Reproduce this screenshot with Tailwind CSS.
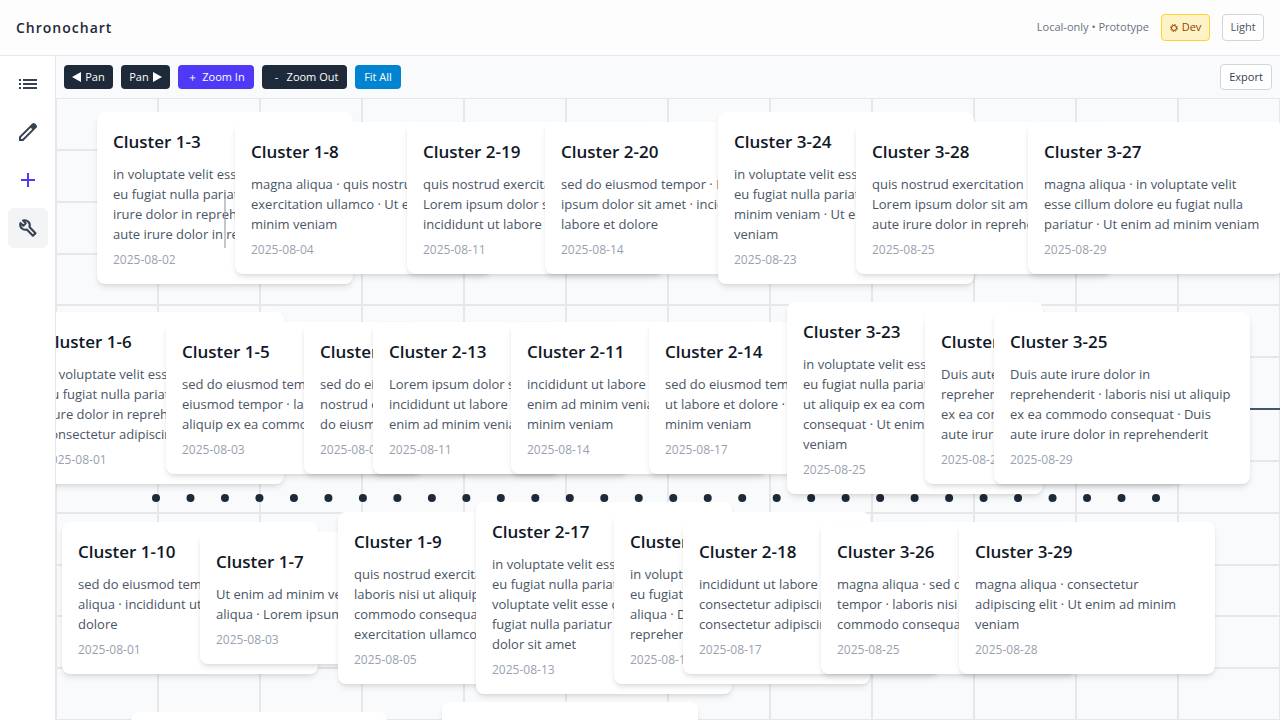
<!DOCTYPE html>
<html lang="en">
<head>
<meta charset="utf-8">
<meta name="viewport" content="width=device-width, initial-scale=1">
<title>Chronochart</title>
<script src="https://cdn.jsdelivr.net/npm/@tailwindcss/browser@4"></script>
</head>
<body class="flex h-screen flex-col overflow-hidden bg-white font-['Open_Sans','Noto_Sans',sans-serif] text-gray-800">
<header class="flex h-14 shrink-0 items-center justify-between border-b border-gray-200 bg-[#fdfdfd] px-4">
  <h1 class="text-sm font-semibold tracking-[1px] text-gray-800">Chronochart</h1>
  <div class="flex items-center gap-3 text-[11px]">
    <span class="text-gray-500">Local-only • Prototype</span>
    <button type="button" class="flex h-[27px] w-[49px] items-center justify-center gap-1 rounded border border-[#ffd230] bg-[#fef3c6] text-[#973c00]">
      <svg class="size-2" viewBox="0 0 16 16" fill="none" stroke="currentColor" aria-hidden="true"><circle cx="8" cy="8" r="5" stroke-width="2"/><circle cx="8" cy="8" r="7" stroke-width="2" stroke-dasharray="2.75 2.75"/></svg>
      Dev
    </button>
    <button type="button" class="h-[27px] w-[42px] rounded border border-gray-300 bg-white text-gray-600">Light</button>
  </div>
</header>
<div class="flex min-h-0 grow">
  <nav aria-label="Tools" class="flex w-14 shrink-0 flex-col items-center gap-2 border-r border-gray-200 bg-white py-2 text-gray-700">
    <button type="button" aria-label="Events" class="flex size-10 items-center justify-center rounded-md">
      <svg class="size-6" viewBox="0 0 24 24" fill="currentColor" aria-hidden="true"><path d="M3 7h2v2H3zM7 7h14v2H7zM3 11h2v2H3zM7 11h14v2H7zM3 15h2v2H3zM7 15h14v2H7z"/></svg>
    </button>
    <button type="button" aria-label="Edit" class="flex size-10 items-center justify-center rounded-md">
      <svg class="size-6" viewBox="0 0 24 24" fill="currentColor" aria-hidden="true"><path d="M5 19h1.425L16.2 9.225 14.775 7.8 5 17.575V19Zm-2 2v-4.25L16.2 3.575q.3-.275.663-.425.362-.15.762-.15t.775.15q.375.15.65.45L20.425 5q.3.275.438.65.137.375.137.75 0 .4-.137.762-.138.363-.438.663L7.25 21Z"/></svg>
    </button>
    <button type="button" aria-label="Add" class="flex size-10 items-center justify-center rounded-md text-[#4f39f6]">
      <svg class="size-6" viewBox="0 0 24 24" fill="currentColor" aria-hidden="true"><path d="M11 13H5v-2h6V5h2v6h6v2h-6v6h-2Z"/></svg>
    </button>
    <button type="button" aria-label="Developer tools" aria-pressed="true" class="flex size-10 items-center justify-center rounded-md bg-gray-100">
      <svg class="size-[18px] overflow-visible" viewBox="0 0 24 24" fill="none" stroke="currentColor" stroke-width="2.8" stroke-linejoin="round" aria-hidden="true"><path d="M22 19l-8-8.4c.8-2.4.2-5-1.6-6.8C10.600 2 8 1.300 5.400 2.100L9 5.800 5.800 9 2 5.400C1.200 8 1.800 10.600 3.600 12.400c1.800 1.800 4.400 2.400 6.800 1.600l8.200 8.200z"/></svg>
    </button>
  </nav>
  <main class="flex min-w-0 grow flex-col bg-[#f9fafc]">
    <div class="flex h-[43px] shrink-0 items-center gap-2 border-b border-gray-200 px-2 text-[11px] text-white">
      <button type="button" class="flex h-6 w-[49px] items-center justify-center gap-1 rounded bg-gray-800"><svg class="h-[10px] w-[9px]" viewBox="0 0 9 10" fill="currentColor" aria-hidden="true"><path d="M9 0v10L0 5z"/></svg>Pan</button>
      <button type="button" class="flex h-6 w-[49px] items-center justify-center gap-1 rounded bg-gray-800">Pan<svg class="h-[10px] w-[9px]" viewBox="0 0 9 10" fill="currentColor" aria-hidden="true"><path d="M0 0v10l9-5z"/></svg></button>
      <button type="button" class="flex h-6 w-[76px] items-center justify-center gap-1 rounded bg-[#4f39f6]"><span>＋</span>Zoom In</button>
      <button type="button" class="flex h-6 w-[85px] items-center justify-center gap-1 rounded bg-gray-800"><span class="w-3">-</span>Zoom Out</button>
      <button type="button" class="h-6 w-[46px] rounded bg-[#0084d1]">Fit All</button>
      <button type="button" class="ml-auto h-[26px] w-[52px] rounded border border-gray-300 bg-white text-gray-700">Export</button>
    </div>
    <div id="canvas" class="relative min-h-0 grow overflow-hidden">
      <svg id="grid" class="absolute inset-x-0 -top-px h-[calc(100%+1px)] w-full text-gray-200" stroke="currentColor" stroke-width="2" shape-rendering="crispEdges" aria-hidden="true"></svg>
      <div class="absolute inset-x-0 bottom-1/2 h-[2px] bg-slate-600"></div>
      <svg id="dots" class="absolute inset-0 size-full text-gray-800" fill="currentColor" aria-hidden="true"></svg>
    </div>
  </main>
</div>
<template id="card">
  <article class="absolute w-64 rounded-lg bg-white p-4 shadow-md">
    <h2 class="mb-2 text-[17px] leading-7 font-semibold whitespace-nowrap text-gray-900"></h2>
    <p class="mb-2 text-[13px] leading-5 whitespace-pre text-gray-600"></p>
    <time class="block text-xs leading-4 text-gray-400"></time>
  </article>
</template>
<script>
// Each event: left, top, title, text lines, date.
const events = [
  [41, 13, 'Cluster 1-3', 'in voluptate velit esse cillum\neu fugiat nulla pariatur · Duis\nirure dolor in reprehenderit\naute irure dolor in reprehend', '2025-08-02'],
  [179, 23, 'Cluster 1-8', 'magna aliqua · quis nostrud\nexercitation ullamco · Ut enim\nminim veniam', '2025-08-04'],
  [351, 23, 'Cluster 2-19', 'quis nostrud exercitation\nLorem ipsum dolor sit amet\nincididunt ut labore et dolore', '2025-08-11'],
  [489, 23, 'Cluster 2-20', 'sed do eiusmod tempor · Lorem\nipsum dolor sit amet · incididunt\nlabore et dolore', '2025-08-14'],
  [662, 13, 'Cluster 3-24', 'in voluptate velit esse cillum\neu fugiat nulla pariatur · Ut\nminim veniam · Ut enim ad\nveniam', '2025-08-23'],
  [800, 23, 'Cluster 3-28', 'quis nostrud exercitation\nLorem ipsum dolor sit amet\naute irure dolor in reprehend', '2025-08-25'],
  [972, 23, 'Cluster 3-27', 'magna aliqua · in voluptate velit\nesse cillum dolore eu fugiat nulla\npariatur · Ut enim ad minim veniam', '2025-08-29'],
  [-28, 213, 'Cluster 1-6', 'in voluptate velit esse cillum\neu fugiat nulla pariatur · Duis\nirure dolor in reprehenderit\nconsectetur adipiscing elit', '2025-08-01'],
  [110, 223, 'Cluster 1-5', 'sed do eiusmod tempor · sed\neiusmod tempor · laboris nisi\naliquip ex ea commodo', '2025-08-03'],
  [248, 223, 'Cluster 2-12', 'sed do eiusmod tempor\nnostrud exercitation\ndo eiusmod tempor', '2025-08-09'],
  [317, 223, 'Cluster 2-13', 'Lorem ipsum dolor sit amet\nincididunt ut labore et dolore\nenim ad minim veniam', '2025-08-11'],
  [455, 223, 'Cluster 2-11', 'incididunt ut labore et dolore\nenim ad minim veniam · Ut\nminim veniam', '2025-08-14'],
  [593, 223, 'Cluster 2-14', 'sed do eiusmod tempor\nut labore et dolore · Ut enim\nminim veniam', '2025-08-17'],
  [731, 203, 'Cluster 3-23', 'in voluptate velit esse cillum\neu fugiat nulla pariatur\nut aliquip ex ea commodo\nconsequat · Ut enim ad\nveniam', '2025-08-25'],
  [869, 213, 'Cluster 3-22', 'Duis aute irure dolor in\nreprehenderit · laboris nisi\nex ea commodo consequat\naute irure dolor', '2025-08-27'],
  [938, 213, 'Cluster 3-25', 'Duis aute irure dolor in\nreprehenderit · laboris nisi ut aliquip\nex ea commodo consequat · Duis\naute irure dolor in reprehenderit', '2025-08-29'],
  [6, 423, 'Cluster 1-10', 'sed do eiusmod tempor\naliqua · incididunt ut labore\ndolore', '2025-08-01'],
  [144, 433, 'Cluster 1-7', 'Ut enim ad minim veniam\naliqua · Lorem ipsum dolor', '2025-08-03'],
  [282, 413, 'Cluster 1-9', 'quis nostrud exercitation\nlaboris nisi ut aliquip ex ea\ncommodo consequat · quis\nexercitation ullamco', '2025-08-05'],
  [420, 403, 'Cluster 2-17', 'in voluptate velit esse cillum\neu fugiat nulla pariatur · in\nvoluptate velit esse cillum\nfugiat nulla pariatur · Lorem\ndolor sit amet', '2025-08-13'],
  [558, 413, 'Cluster 2-16', 'in voluptate velit esse\neu fugiat nulla pariatur\naliqua · Duis aute irure\nreprehenderit', '2025-08-15'],
  [627, 423, 'Cluster 2-18', 'incididunt ut labore et dolore\nconsectetur adipiscing elit\nconsectetur adipiscing elit', '2025-08-17'],
  [765, 423, 'Cluster 3-26', 'magna aliqua · sed do eiusmod\ntempor · laboris nisi ut aliquip\ncommodo consequat', '2025-08-25'],
  [903, 423, 'Cluster 3-29', 'magna aliqua · consectetur\nadipiscing elit · Ut enim ad minim\nveniam', '2025-08-28'],
  [75, 613, 'Cluster 1-4', 'magna aliqua', '2025-08-04'],
  [386, 603, 'Cluster 2-15', 'magna aliqua', '2025-08-13']
];
const canvas = document.getElementById('canvas');
const NS = 'http://www.w3.org/2000/svg';
function shape(parent, tag, attrs) {
  const el = document.createElementNS(NS, tag);
  for (const k in attrs) el.setAttribute(k, attrs[k]);
  parent.append(el);
}
const grid = document.getElementById('grid');
for (let i = 0; i <= 12; i++) {
  const p = i / 12 * 100 + '%';
  shape(grid, 'line', {x1: p, x2: p, y1: 0, y2: '100%'});
  shape(grid, 'line', {y1: p, y2: p, x1: 0, x2: '100%'});
}
const dots = document.getElementById('dots');
for (let i = 0; i < 30; i++) shape(dots, 'circle', {cx: 100 + i * 1000 / 29, cy: 399, r: 4});
for (const [left, top, title, text, date] of events) {
  const el = document.getElementById('card').content.firstElementChild.cloneNode(true);
  el.style.left = left + 'px';
  el.style.top = top + 'px';
  el.querySelector('h2').textContent = title;
  el.querySelector('p').textContent = text;
  el.querySelector('time').textContent = date;
  canvas.append(el);
}
const marker = document.createElement('div');
marker.className = 'absolute left-[168px] top-[99px] h-[50px] w-[2px] bg-gray-400/60';
canvas.append(marker);
</script>
</body>
</html>
